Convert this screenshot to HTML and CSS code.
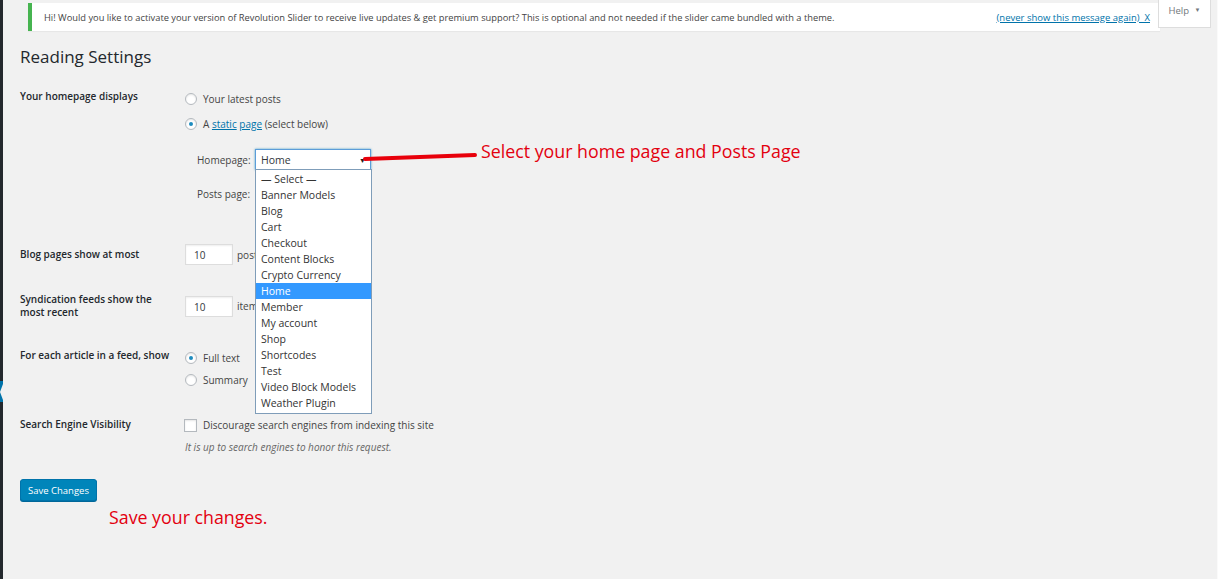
FILE: index.html
```html
<!DOCTYPE html>
<html lang="en">
<head>
    <meta charset="UTF-8">
    <meta name="viewport" content="width=device-width, initial-scale=1.0">
    <title>Reading Settings</title>
    <link rel="stylesheet" href="styles.css">
</head>
<body>
    <div class="admin">
        <div class="sidebar-edge">
            <span class="current-item"></span>
        </div>

        <div class="content">
            <div class="help-tab">Help <span class="help-arrow">&#9660;</span></div>

            <div class="notice">
                <span class="notice-text">Hi! Would you like to activate your version of Revolution Slider to receive live updates &amp; get premium support? This is optional and not needed if the slider came bundled with a theme.</span>
                <a href="#" class="notice-dismiss">(never show this message again)&nbsp; X</a>
            </div>

            <h1 class="page-title">Reading Settings</h1>

            <form class="settings-form">
                <div class="row row-front">
                    <div class="row-label">Your homepage displays</div>
                    <div class="row-field">
                        <label class="choice first"><span class="radio"></span><span>Your latest posts</span></label>
                        <label class="choice second"><span class="radio checked"></span><span>A <a href="#">static</a> <a href="#">page</a> (select below)</span></label>

                        <div class="page-select home-select">
                            <span class="select-label">Homepage:</span>
                            <div class="select-wrap">
                                <div class="select-box focused">Home <span class="select-arrow">&#9660;</span></div>
                                <ul class="select-list">
                                    <li>&mdash; Select &mdash;</li>
                                    <li>Banner Models</li>
                                    <li>Blog</li>
                                    <li>Cart</li>
                                    <li>Checkout</li>
                                    <li>Content Blocks</li>
                                    <li>Crypto Currency</li>
                                    <li class="active">Home</li>
                                    <li>Member</li>
                                    <li>My account</li>
                                    <li>Shop</li>
                                    <li>Shortcodes</li>
                                    <li>Test</li>
                                    <li>Video Block Models</li>
                                    <li>Weather Plugin</li>
                                </ul>
                            </div>
                        </div>

                        <div class="page-select posts-select">
                            <span class="select-label">Posts page:</span>
                            <div class="select-wrap">
                                <div class="select-box"></div>
                            </div>
                        </div>
                    </div>
                </div>

                <div class="row row-blog">
                    <div class="row-label">Blog pages show at most</div>
                    <div class="row-field inline">
                        <span class="num-input">10</span> posts
                    </div>
                </div>

                <div class="row row-feed">
                    <div class="row-label">Syndication feeds show the<br>most recent</div>
                    <div class="row-field inline">
                        <span class="num-input">10</span> items
                    </div>
                </div>

                <div class="row row-article">
                    <div class="row-label">For each article in a feed, show</div>
                    <div class="row-field">
                        <label class="choice"><span class="radio checked"></span><span>Full text</span></label>
                        <label class="choice summary"><span class="radio"></span><span>Summary</span></label>
                    </div>
                </div>

                <div class="row row-search">
                    <div class="row-label">Search Engine Visibility</div>
                    <div class="row-field">
                        <label class="choice"><span class="checkbox"></span><span>Discourage search engines from indexing this site</span></label>
                        <p class="description">It is up to search engines to honor this request.</p>
                    </div>
                </div>

                <button type="button" class="btn-primary">Save Changes</button>
                <div class="note save-note">Save your changes.</div>
            </form>

            <svg class="arrow-line" width="120" height="12" viewBox="0 0 120 12">
                <path d="M3 8 L113 4" stroke="#e8000b" stroke-width="4" stroke-linecap="round" fill="none"/>
            </svg>
            <div class="note select-note">Select your home page and Posts Page</div>
        </div>
    </div>
</body>
</html>
```

FILE: styles.css
```css
:root {
    --text: #23282d;
    --field-text: #444;
    --link: #0073aa;
    --background: #f1f1f1;
    --red: #e3000f;
}

body {
    margin: 0;
    background-color: var(--background);
    font-family: 'Open Sans', 'Noto Sans', sans-serif;
    color: var(--text);
}

.admin {
    display: flex;
    height: 579px;
    overflow: hidden;
}

.sidebar-edge {
    position: relative;
    width: 3px;
    flex-shrink: 0;
    background: #23282d;
}

.current-item {
    position: absolute;
    left: 0;
    top: 381px;
    width: 3px;
    height: 21px;
    background: #0073aa;
}

.current-item::after {
    content: "";
    position: absolute;
    right: 0;
    top: 3px;
    border-top: 8px solid transparent;
    border-bottom: 8px solid transparent;
    border-right: 3px solid var(--background);
}

.content {
    position: relative;
    flex: 1;
    padding-left: 17px;
    border-right: 1px solid #fafafa;
}

/* notice bar */
.notice {
    display: flex;
    align-items: center;
    justify-content: space-between;
    height: 28px;
    margin: 3px 57px 0 8px;
    padding: 0 10px 0 12px;
    background: #fff;
    border-left: 4px solid #46b450;
    box-shadow: 0 1px 1px rgba(0,0,0,0.04);
    font-size: 9.3px;
    color: #444;
}

.notice-dismiss {
    color: var(--link);
    font-size: 9.5px;
}

.help-tab {
    position: absolute;
    top: -1px;
    right: 6px;
    z-index: 2;
    width: 53px;
    height: 29px;
    box-sizing: border-box;
    padding-top: 5px;
    text-align: center;
    background: #fff;
    border: 1px solid #ddd;
    border-top: none;
    font-size: 9.5px;
    color: #72777c;
}

.help-arrow {
    font-size: 6px;
    margin-left: 3px;
    vertical-align: 2px;
}

.page-title {
    margin: 15px 0 0 0;
    font-size: 17px;
    font-weight: 400;
    line-height: 22px;
}

/* form rows */
.settings-form {
    font-size: 10px;
    line-height: 14px;
}

.row {
    display: grid;
    grid-template-columns: 165px 1fr;
}

.row-label {
    font-weight: 600;
    line-height: 13px;
}

.row-front {
    margin-top: 22px;
}

.row-field {
    color: var(--field-text);
}

.row-field a {
    color: var(--link);
}

.choice {
    display: flex;
    align-items: center;
    height: 14px;
}

.row-front .first {
    margin-top: 2px;
}

.row-front .second {
    margin-top: 11px;
}

.radio,
.checkbox {
    display: inline-block;
    position: relative;
    width: 10px;
    height: 10px;
    margin-right: 6px;
    background: #fff;
    border: 1px solid #b4b9be;
    box-shadow: inset 0 1px 2px rgba(0,0,0,0.1);
}

.radio {
    border-radius: 50%;
}

.checkbox {
    width: 11px;
    height: 11px;
    margin-left: -1px;
}

.radio.checked::after {
    content: "";
    position: absolute;
    left: 3px;
    top: 3px;
    width: 4px;
    height: 4px;
    border-radius: 50%;
    background: #1e8cbe;
}

.page-select {
    display: flex;
    align-items: center;
    margin-left: 12px;
}

.home-select {
    margin-top: 18px;
}

.posts-select {
    margin-top: 13px;
}

.select-label {
    width: 58px;
}

.select-wrap {
    position: relative;
}

.select-box {
    position: relative;
    width: 116px;
    height: 21px;
    box-sizing: border-box;
    padding: 3px 5px;
    background: #fff;
    border: 1px solid #ddd;
    color: #32373c;
    font-size: 10.5px;
}

.select-box.focused {
    border-color: #5b9dd9;
    box-shadow: 0 0 2px rgba(30,140,190,0.8);
}

.select-arrow {
    position: absolute;
    right: 4px;
    top: 4px;
    font-size: 7px;
    color: #222;
}

.select-list {
    position: absolute;
    z-index: 3;
    left: 0;
    top: 20px;
    width: 117px;
    box-sizing: border-box;
    margin: 0;
    padding: 1px 0 2px 0;
    list-style: none;
    background: #fff;
    border: 1px solid #7f9db9;
    color: #333;
    font-size: 10.5px;
}

.select-list li {
    height: 16px;
    line-height: 16px;
    padding-left: 5px;
    white-space: nowrap;
}

.select-list li.active {
    background: #3399ff;
    color: #fff;
}

.inline {
    display: flex;
    align-items: center;
}

.num-input {
    display: inline-block;
    width: 48px;
    height: 21px;
    box-sizing: border-box;
    margin-right: 4px;
    padding: 3px 8px;
    background: #fff;
    border: 1px solid #ddd;
    box-shadow: inset 0 1px 2px rgba(0,0,0,0.07);
    color: #32373c;
}

.row-blog {
    align-items: center;
    margin-top: 40px;
}

.row-feed {
    align-items: center;
    margin-top: 28px;
}

.row-article {
    margin-top: 30px;
}

.row-article .choice {
    margin-top: 2px;
}

.row-article .summary {
    margin-top: 8px;
}

.row-search {
    margin-top: 31px;
}

.row-search .choice {
    margin-top: 0;
}

.description {
    margin: 8px 0 0 0;
    font-style: italic;
    font-size: 10px;
    color: #666;
}

.btn-primary {
    display: block;
    margin-top: 25px;
    width: 77px;
    height: 22px;
    padding: 0;
    background: #0085ba;
    border: 1px solid #0073aa;
    border-radius: 3px;
    box-shadow: 0 1px 0 #006799;
    color: #fff;
    font-family: inherit;
    font-size: 9.5px;
}

/* red annotations */
.note {
    color: var(--red);
    font-size: 17.8px;
    line-height: 22px;
}

.save-note {
    margin: 5px 0 0 89px;
}

.select-note {
    position: absolute;
    left: 478px;
    top: 140px;
}

.arrow-line {
    position: absolute;
    left: 359px;
    top: 151px;
}
```
